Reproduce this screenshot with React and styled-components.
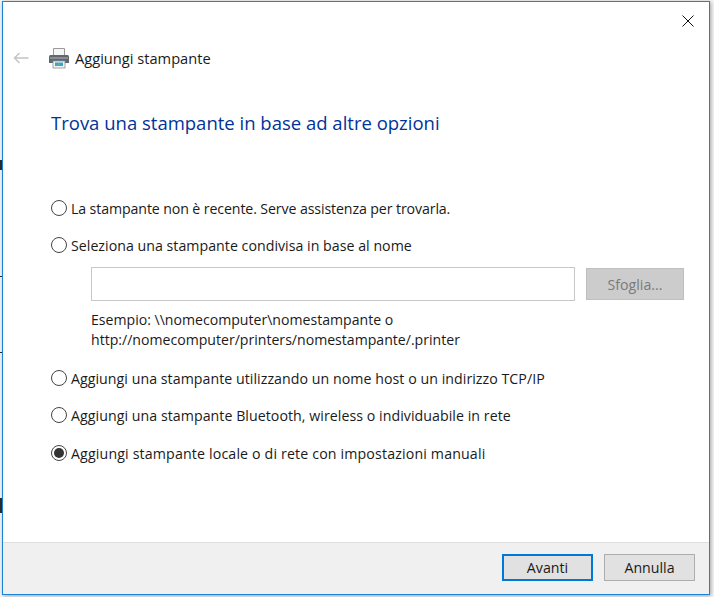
import React from 'react'
import styled, { createGlobalStyle } from 'styled-components'

const GlobalStyle = createGlobalStyle`
  html, body {
    margin: 0;
    padding: 0;
    background: #fff;
  }
  body {
    font-family: "Open Sans", "Noto Sans", sans-serif;
    overflow: hidden;
  }
`

const Desktop = styled.div`
  position: relative;
  width: 714px;
  height: 597px;
  padding: 1px 0 0 2px;
  box-sizing: border-box;
  background: #f6f6f6;
`

// bits of what is behind the dialog, peeking out on the left
const BehindMark = styled.div`
  position: absolute;
  left: 0;
  width: 2px;
  top: ${props => props.$top}px;
  height: ${props => props.$height}px;
  background: #2a2a2a;
`

const Window = styled.div`
  width: 708px;
  height: 594px;
  box-sizing: border-box;
  display: flex;
  flex-direction: column;
  background: #fff;
  border: 1px solid #1883d7;
  box-shadow: 1px 1px 4px rgba(0, 0, 0, 0.35);
`

const TitleBar = styled.div`
  height: 38px;
  display: flex;
  justify-content: flex-end;
  align-items: flex-start;
`

const CloseButton = styled.button`
  width: 42px;
  height: 37px;
  padding: 0;
  border: 0;
  background: none;
  display: flex;
  align-items: center;
  justify-content: center;
`

const Header = styled.div`
  height: 36px;
  display: flex;
  align-items: center;
  padding-left: 10px;
`

const BackArrow = styled.svg`
  width: 16px;
  height: 12px;
  margin-right: 19px;
`

const PrinterIcon = styled.svg`
  width: 22px;
  height: 22px;
  margin-right: 5px;
`

const HeaderTitle = styled.span`
  font-size: 14.65px;
  color: #1a1a1a;
`

const Body = styled.div`
  flex: 1;
  padding: 0 24px 0 48px;
`

const Heading = styled.h1`
  margin: 33px 0 59px;
  font-size: 18.5px;
  line-height: 28px;
  font-weight: 400;
  color: #003399;
`

const OptionRow = styled.label`
  height: 24px;
  display: flex;
  align-items: center;
  gap: 4px;
  margin-bottom: ${props => props.$gap}px;
  font-size: 14.2px;
  letter-spacing: ${props => props.$track || 0}px;
  color: #1a1a1a;
`

const Radio = styled.span`
  width: 16px;
  height: 16px;
  box-sizing: border-box;
  flex: none;
  border: 1px solid #444;
  border-radius: 50%;
  background: #fff;
  display: flex;
  align-items: center;
  justify-content: center;
  &::after {
    content: '';
    width: 10px;
    height: 10px;
    border-radius: 50%;
    background: ${props => (props.$checked ? '#333' : 'transparent')};
  }
`

const SharedBlock = styled.div`
  padding-left: 40px;
  margin: 0 0 16px;
`

const PathRow = styled.div`
  display: flex;
  align-items: center;
  gap: 11px;
`

const PathInput = styled.div`
  width: 484px;
  height: 34px;
  box-sizing: border-box;
  border: 1px solid #c8c8c8;
  background: #fff;
`

const BrowseButton = styled.button`
  width: 98px;
  height: 32px;
  padding: 0;
  border: 1px solid #bfbfbf;
  background: #cccccc;
  color: #7a7a7a;
  font: inherit;
  font-size: 14.2px;
`

const Hint = styled.div`
  margin-top: 9px;
  font-size: 14.1px;
  line-height: 20px;
  color: #1a1a1a;
`

const Footer = styled.div`
  height: 52px;
  box-sizing: border-box;
  display: flex;
  justify-content: flex-end;
  gap: 11px;
  padding: 11px 14px 0 0;
  background: #f0f0f0;
  border-top: 1px solid #dfdfdf;
`

const FooterButton = styled.button`
  width: 91px;
  height: 27px;
  padding: 0;
  box-sizing: border-box;
  background: #e1e1e1;
  color: #1a1a1a;
  font: inherit;
  font-size: 14.2px;
  border: ${props => (props.$primary ? '2px solid #0078d7' : '1px solid #adadad')};
`

const options = [
  { label: 'La stampante non è recente. Serve assistenza per trovarla.', gap: 13, track: -0.12 },
  { label: 'Seleziona una stampante condivisa in base al nome', gap: 10, track: 0.02, shared: true },
  { label: 'Aggiungi una stampante utilizzando un nome host o un indirizzo TCP/IP', gap: 13, track: 0.04 },
  { label: 'Aggiungi una stampante Bluetooth, wireless o individuabile in rete', gap: 14, track: 0.045 },
  { label: 'Aggiungi stampante locale o di rete con impostazioni manuali', gap: 0, track: 0.15, checked: true }
]

const marks = [
  { top: 160, height: 10 },
  { top: 276, height: 1 },
  { top: 352, height: 1 },
  { top: 498, height: 15 }
]

export default function App() {
  return (
    <Desktop>
      <GlobalStyle />
      {marks.map(mark => (
        <BehindMark key={mark.top} $top={mark.top} $height={mark.height} />
      ))}
      <Window>
        <TitleBar>
          <CloseButton aria-label="Chiudi">
            <svg width="12" height="12" viewBox="0 0 12 12">
              <path d="M0.5 0.5 L11.5 11.5 M11.5 0.5 L0.5 11.5" stroke="#111" strokeWidth="1" fill="none" />
            </svg>
          </CloseButton>
        </TitleBar>
        <Header>
          <BackArrow viewBox="0 0 16 12">
            <path d="M15.5 6 H1.5 M6.5 1 L1.5 6 L6.5 11" stroke="#c4c4c4" strokeWidth="1.5" fill="none" />
          </BackArrow>
          <PrinterIcon viewBox="0 0 22 22">
            <path d="M5.5 1.5 H16.5 V9 H5.5 Z" fill="#f6f6f6" stroke="#9a9a9a" />
            <path d="M1 9.5 Q1 8 2.5 8 H19.5 Q21 8 21 9.5 V16 H1 Z" fill="#5f676f" />
            <rect x="2" y="10" width="18" height="2" fill="#868e96" />
            <rect x="5" y="14" width="12" height="7" fill="#eef4f6" stroke="#8a8f94" strokeWidth="0.8" />
            <rect x="7" y="15.5" width="8" height="3.5" fill="#3f9fc8" />
            <rect x="9" y="16.5" width="3" height="2" fill="#5cb85c" />
          </PrinterIcon>
          <HeaderTitle>Aggiungi stampante</HeaderTitle>
        </Header>
        <Body>
          <Heading>Trova una stampante in base ad altre opzioni</Heading>
          {options.map(option => (
            <React.Fragment key={option.label}>
              <OptionRow $gap={option.gap} $track={option.track}>
                <Radio $checked={option.checked} />
                {option.label}
              </OptionRow>
              {option.shared && (
                <SharedBlock>
                  <PathRow>
                    <PathInput />
                    <BrowseButton disabled>Sfoglia...</BrowseButton>
                  </PathRow>
                  <Hint>
                    Esempio: \\nomecomputer\nomestampante o
                    <br />
                    http://nomecomputer/printers/nomestampante/.printer
                  </Hint>
                </SharedBlock>
              )}
            </React.Fragment>
          ))}
        </Body>
        <Footer>
          <FooterButton $primary>Avanti</FooterButton>
          <FooterButton>Annulla</FooterButton>
        </Footer>
      </Window>
    </Desktop>
  )
}
